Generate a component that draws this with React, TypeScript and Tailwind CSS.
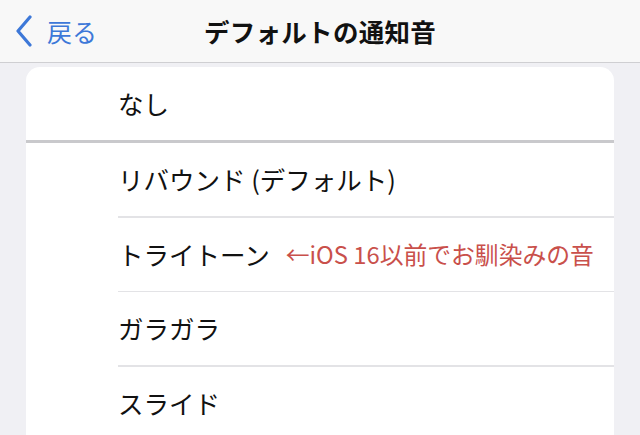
import React from "react";

const rows = [
  { label: "リバウンド (デフォルト)" },
  { label: "トライトーン", note: "←iOS 16以前でお馴染みの音" },
  { label: "ガラガラ" },
  { label: "スライド" },
];

const App: React.FC = () => {
  return (
    <div
      className="w-[640px] h-[435px] overflow-hidden bg-[#f0f0f4] text-[#111]"
      style={{ fontFamily: '"Noto Sans CJK JP", "Noto Sans", sans-serif' }}
    >
      <div className="relative h-[63px] bg-[#f8f8f8] border-b border-[#cfcfd2] flex items-center justify-center">
        <div className="absolute left-[14px] top-0 h-full flex items-center gap-[13px] text-[#3d78d8]">
          <svg width="20" height="32" viewBox="0 0 20 32" fill="none">
            <path d="M16 2 L4 16 L16 30" stroke="currentColor" strokeWidth="3.2" strokeLinecap="round" strokeLinejoin="round" />
          </svg>
          <span className="text-[25px] leading-none">戻る</span>
        </div>
        <h1 className="text-[25.5px] font-bold leading-none tracking-[0.3px]">デフォルトの通知音</h1>
      </div>

      <div className="mx-[26px] mt-[4px] bg-white rounded-t-[14px] overflow-hidden">
        <div className="h-[73px] flex items-center pl-[92px] text-[25.5px]">なし</div>
        <div className="h-[3px] bg-[#c9c9cc]" />
        {rows.map((row, i) => (
          <div key={i}>
            {i > 0 && <div className="ml-[92px] h-[1.5px] bg-[#e3e3e6]" />}
            <div className="h-[73px] flex items-center pl-[92px] text-[25.5px]">
              <span>{row.label}</span>
              {row.note && (
                <span className="ml-[16px] text-[23.8px] text-[#c9504b]">{row.note}</span>
              )}
            </div>
          </div>
        ))}
      </div>
    </div>
  );
};

export default App;
